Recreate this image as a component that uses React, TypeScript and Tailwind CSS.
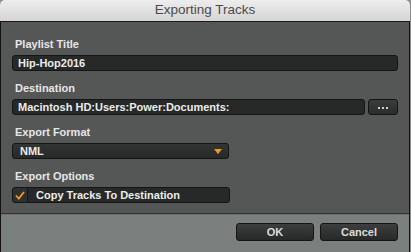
import React from 'react';

const font = { fontFamily: '"Liberation Sans", Arial, sans-serif' };

function Label({ children }: { children: React.ReactNode }) {
    return <div className="h-[16px] leading-[16px] text-[11px] font-bold text-[#e6e6e6] pl-[3px]">{children}</div>;
}

function Field({ children, className = '' }: { children?: React.ReactNode; className?: string }) {
    return (
        <div
            className={`h-[16px] flex items-center rounded-[3px] border border-[#141514] bg-[#272928] text-[11px] font-bold text-[#ececec] ${className}`}
        >
            {children}
        </div>
    );
}

export default function App() {
    return (
        <div className="w-[411px] h-[252px] bg-[#8c8c8c] overflow-hidden" style={font}>
            <div className="w-[410px] h-[252px] flex flex-col">
                {/* Title bar */}
                <div className="h-[22px] shrink-0 rounded-t-[5px] bg-gradient-to-b from-[#ededed] to-[#d5d5d5] border-b border-[#1a1a1a] flex items-center justify-center text-[13.5px] text-[#4b4b4b]">
                    Exporting Tracks
                </div>

                {/* Body */}
                <div className="flex-1 flex flex-col border-x border-[#111] bg-[#555756]">
                    <div className="flex flex-col gap-[9px] px-[11px] pt-[14px] pb-[10px] border-b border-[#333534]">
                        <div className="flex flex-col gap-[3px]">
                            <Label>Playlist Title</Label>
                            <Field className="pl-[5px]">Hip-Hop2016</Field>
                        </div>

                        <div className="flex flex-col gap-[3px]">
                            <Label>Destination</Label>
                            <div className="flex gap-[3px]">
                                <Field className="flex-1 pl-[5px]">Macintosh HD:Users:Power:Documents:</Field>
                                <button className="w-[30px] h-[16px] rounded-[3px] border border-[#141514] bg-gradient-to-b from-[#3b3d3c] to-[#2a2c2b] flex items-center justify-center gap-[2px] pt-[1px]">
                                    <span className="w-[2px] h-[2px] bg-[#cfcfcf]" />
                                    <span className="w-[2px] h-[2px] bg-[#cfcfcf]" />
                                    <span className="w-[2px] h-[2px] bg-[#cfcfcf]" />
                                </button>
                            </div>
                        </div>

                        <div className="flex flex-col gap-[3px]">
                            <Label>Export Format</Label>
                            <Field className="w-[217px] pl-[7px] pr-[6px] justify-between bg-gradient-to-b from-[#333534] to-[#272928]">
                                <span>NML</span>
                                <svg width="8" height="5" viewBox="0 0 8 5">
                                    <polygon points="0,0 8,0 4,5" fill="#f39a1e" />
                                </svg>
                            </Field>
                        </div>

                        <div className="flex flex-col gap-[3px]">
                            <Label>Export Options</Label>
                            <Field className="w-[218px]">
                                <div className="w-[15px] h-full flex items-center justify-center border-r border-[#141514] bg-[#2e302f] rounded-l-[3px]">
                                    <svg width="10" height="9" viewBox="0 0 10 9">
                                        <polyline points="1,4.5 3.8,7.5 9,1" fill="none" stroke="#f39a1e" strokeWidth="1.8" />
                                    </svg>
                                </div>
                                <span className="pl-[8px]">Copy Tracks To Destination</span>
                            </Field>
                        </div>
                    </div>

                    {/* Footer */}
                    <div className="flex-1 bg-[#7b7f7d] flex justify-end items-start gap-[6px] px-[11px] pt-[8px] border-t border-[#6a6e6c]">
                        <button className="w-[78px] h-[18px] rounded-[3px] border border-[#151515] bg-gradient-to-b from-[#3d3f3e] to-[#272928] text-[11px] font-bold text-[#dcdcdc] leading-none">
                            OK
                        </button>
                        <button className="w-[78px] h-[18px] rounded-[3px] border border-[#151515] bg-gradient-to-b from-[#3d3f3e] to-[#272928] text-[11px] font-bold text-[#dcdcdc] leading-none">
                            Cancel
                        </button>
                    </div>
                </div>
            </div>
        </div>
    );
}
